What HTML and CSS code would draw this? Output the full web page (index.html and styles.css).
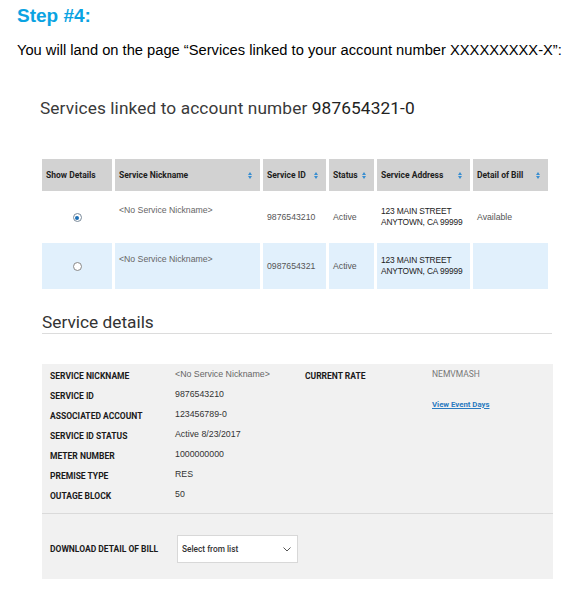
FILE: index.html
```html
<!DOCTYPE html>
<html>
<head>
<meta charset="utf-8">
<link rel="stylesheet" href="styles.css">
</head>
<body>
<div class="doc">
  <h1 class="step">Step #4:</h1>
  <p class="intro">You will land on the page “Services linked to your account number XXXXXXXXX-X”:</p>
</div>
<div class="shot">
  <h2 class="page-title">Services linked to account number <span class="acct">987654321-0</span></h2>
  <table class="svc">
    <thead>
      <tr>
        <th class="c1">Show Details</th>
        <th class="c2"><div class="th-in"><span>Service Nickname</span><i class="sort"></i></div></th>
        <th class="c3"><div class="th-in"><span>Service ID</span><i class="sort"></i></div></th>
        <th class="c4"><div class="th-in"><span>Status</span><i class="sort"></i></div></th>
        <th class="c5"><div class="th-in"><span>Service Address</span><i class="sort"></i></div></th>
        <th class="c6"><div class="th-in"><span>Detail of Bill</span><i class="sort"></i></div></th>
      </tr>
    </thead>
    <tbody>
      <tr>
        <td class="radio-cell"><span class="radio on"></span></td>
        <td class="nick">&lt;No Service Nickname&gt;</td>
        <td class="muted">9876543210</td>
        <td class="muted">Active</td>
        <td class="addr">123 MAIN STREET<br>ANYTOWN, CA 99999</td>
        <td class="muted">Available</td>
      </tr>
      <tr class="alt">
        <td class="radio-cell"><span class="radio"></span></td>
        <td class="nick">&lt;No Service Nickname&gt;</td>
        <td class="muted">0987654321</td>
        <td class="muted">Active</td>
        <td class="addr">123 MAIN STREET<br>ANYTOWN, CA 99999</td>
        <td></td>
      </tr>
    </tbody>
  </table>

  <h3 class="sub-title">Service details</h3>

  <div class="details">
    <div class="det-grid">
      <div class="col-left">
        <div class="row"><span class="lbl">SERVICE NICKNAME</span><span class="val gray">&lt;No Service Nickname&gt;</span></div>
        <div class="row"><span class="lbl">SERVICE ID</span><span class="val">9876543210</span></div>
        <div class="row"><span class="lbl">ASSOCIATED ACCOUNT</span><span class="val">123456789-0</span></div>
        <div class="row"><span class="lbl">SERVICE ID STATUS</span><span class="val">Active 8/23/2017</span></div>
        <div class="row"><span class="lbl">METER NUMBER</span><span class="val">1000000000</span></div>
        <div class="row"><span class="lbl">PREMISE TYPE</span><span class="val">RES</span></div>
        <div class="row"><span class="lbl">OUTAGE BLOCK</span><span class="val">50</span></div>
      </div>
      <div class="col-right">
        <div class="row"><span class="lbl lbl-r">CURRENT RATE</span><span class="val gray rate">NEMVMASH</span></div>
        <div class="row link-row"><span class="lbl-r"></span><a class="link" href="#">View Event Days</a></div>
      </div>
    </div>
    <div class="download">
      <span class="lbl">DOWNLOAD DETAIL OF BILL</span>
      <div class="select"><span>Select from list</span>
        <svg class="chev" width="8" height="5" viewBox="0 0 8 5"><path d="M0.5 0.5 L4 4 L7.5 0.5" fill="none" stroke="#555" stroke-width="1"/></svg>
      </div>
    </div>
  </div>
</div>
</body>
</html>
```

FILE: styles.css
```css
html, body {
  margin: 0;
  padding: 0;
  background: #fff;
}
body {
  width: 585px;
  height: 600px;
  overflow: hidden;
}
.doc {
  padding: 4px 0 0 17px;
  font-family: "Liberation Sans", Arial, sans-serif;
}
.step {
  margin: 0;
  font-size: 19px;
  line-height: 24px;
  font-weight: bold;
  color: #0aa3e2;
}
.intro {
  margin: 14px 0 0 0;
  font-size: 14.7px;
  line-height: 17px;
  color: #000;
  white-space: nowrap;
}
.shot {
  padding-left: 42px;
  width: 511px;
  font-family: Roboto, "DejaVu Sans", sans-serif;
}
.page-title {
  margin: 38px 0 0 -2px;
  font-size: 17.3px;
  line-height: 22px;
  font-weight: normal;
  color: #3a3a3a;
  letter-spacing: 0.1px;
}
.acct {
  color: #222;
}
.svc {
  margin: 37px 0 0 -3px;
  border-collapse: separate;
  border-spacing: 3px;
  table-layout: fixed;
  width: 511px;
}
.svc th {
  background: #d2d2d2;
  height: 32px;
  padding: 0 4px;
  text-align: left;
  font-size: 8.5px;
  font-weight: bold;
  color: #1e1e1e;
  white-space: nowrap;
  box-sizing: border-box;
}
.th-in {
  display: flex;
  align-items: center;
  justify-content: space-between;
  gap: 4px;
}
.c1 { width: 70px; }
.c2 { width: 145px; }
.c3 { width: 63px; }
.c4 { width: 45px; }
.c5 { width: 93px; }
.c6 { width: 75px; }
.sort {
  display: inline-flex;
  flex-direction: column;
  gap: 1px;
  margin-right: 4px;
}
.sort::before, .sort::after {
  content: "";
  display: block;
  width: 0;
  height: 0;
  border-left: 2.5px solid transparent;
  border-right: 2.5px solid transparent;
}
.sort::before {
  border-bottom: 3px solid #3a8ed0;
}
.sort::after {
  border-top: 3px solid #3a8ed0;
}
.svc td {
  height: 46px;
  padding: 0 4px;
  font-family: "Liberation Sans", Arial, sans-serif;
  font-size: 8.7px;
  color: #555;
  vertical-align: middle;
  box-sizing: border-box;
}
.svc tr.alt td {
  background: #e1f0fc;
}
.svc td.nick {
  vertical-align: top;
  padding-top: 11px;
  color: #666;
}
.svc td.addr {
  color: #222;
  font-size: 8.4px;
  letter-spacing: -0.15px;
  line-height: 11px;
  white-space: nowrap;
}
.radio-cell {
  text-align: center;
}
.radio {
  display: inline-block;
  width: 9px;
  height: 9px;
  border: 1px solid #888;
  border-radius: 50%;
  background: #fff;
  box-sizing: border-box;
  position: relative;
  vertical-align: middle;
}
.radio.on {
  border-color: #7a8a9a;
}
.radio.on::after {
  content: "";
  position: absolute;
  left: 1.5px;
  top: 1.5px;
  width: 4px;
  height: 4px;
  border-radius: 50%;
  background: #1b6eb5;
}
.sub-title {
  margin: 19px 0 0 0;
  padding-bottom: 0;
  font-size: 17.3px;
  line-height: 22px;
  font-weight: normal;
  color: #333;
  border-bottom: 1px solid #dcdcdc;
  width: 510px;
}
.details {
  margin-top: 30px;
  width: 511px;
  background: #f1f1f1;
}
.det-grid {
  display: flex;
  padding: 2px 0 7px 8px;
  border-bottom: 1px solid #dadada;
}
.col-left {
  width: 255px;
}
.row {
  display: flex;
  align-items: baseline;
  height: 20px;
  line-height: 20px;
}
.lbl {
  width: 125px;
  font-size: 8.5px;
  font-weight: bold;
  color: #1a1a1a;
  white-space: nowrap;
}
.lbl-r {
  width: 127px;
}
.val {
  font-family: "Liberation Sans", Arial, sans-serif;
  font-size: 8.8px;
  color: #333;
  position: relative;
  top: -2px;
}
.val.gray {
  color: #666;
}
.val.rate {
  font-family: Roboto, "DejaVu Sans", sans-serif;
  font-size: 8.5px;
  color: #777;
}
.link-row {
  margin-top: 9px;
}
.link {
  font-size: 7.8px;
  font-weight: bold;
  color: #2a7ac0;
  text-decoration: underline;
}
.download {
  display: flex;
  align-items: center;
  padding: 21px 0 16px 8px;
}
.download .lbl {
  width: 127px;
}
.select {
  width: 121px;
  height: 28px;
  box-sizing: border-box;
  background: #fff;
  border: 1px solid #d8d8d8;
  display: flex;
  align-items: center;
  justify-content: space-between;
  padding: 0 6px 0 4px;
  font-size: 8.3px;
  font-weight: 500;
  color: #333;
}
.chev {
  display: block;
}
```
